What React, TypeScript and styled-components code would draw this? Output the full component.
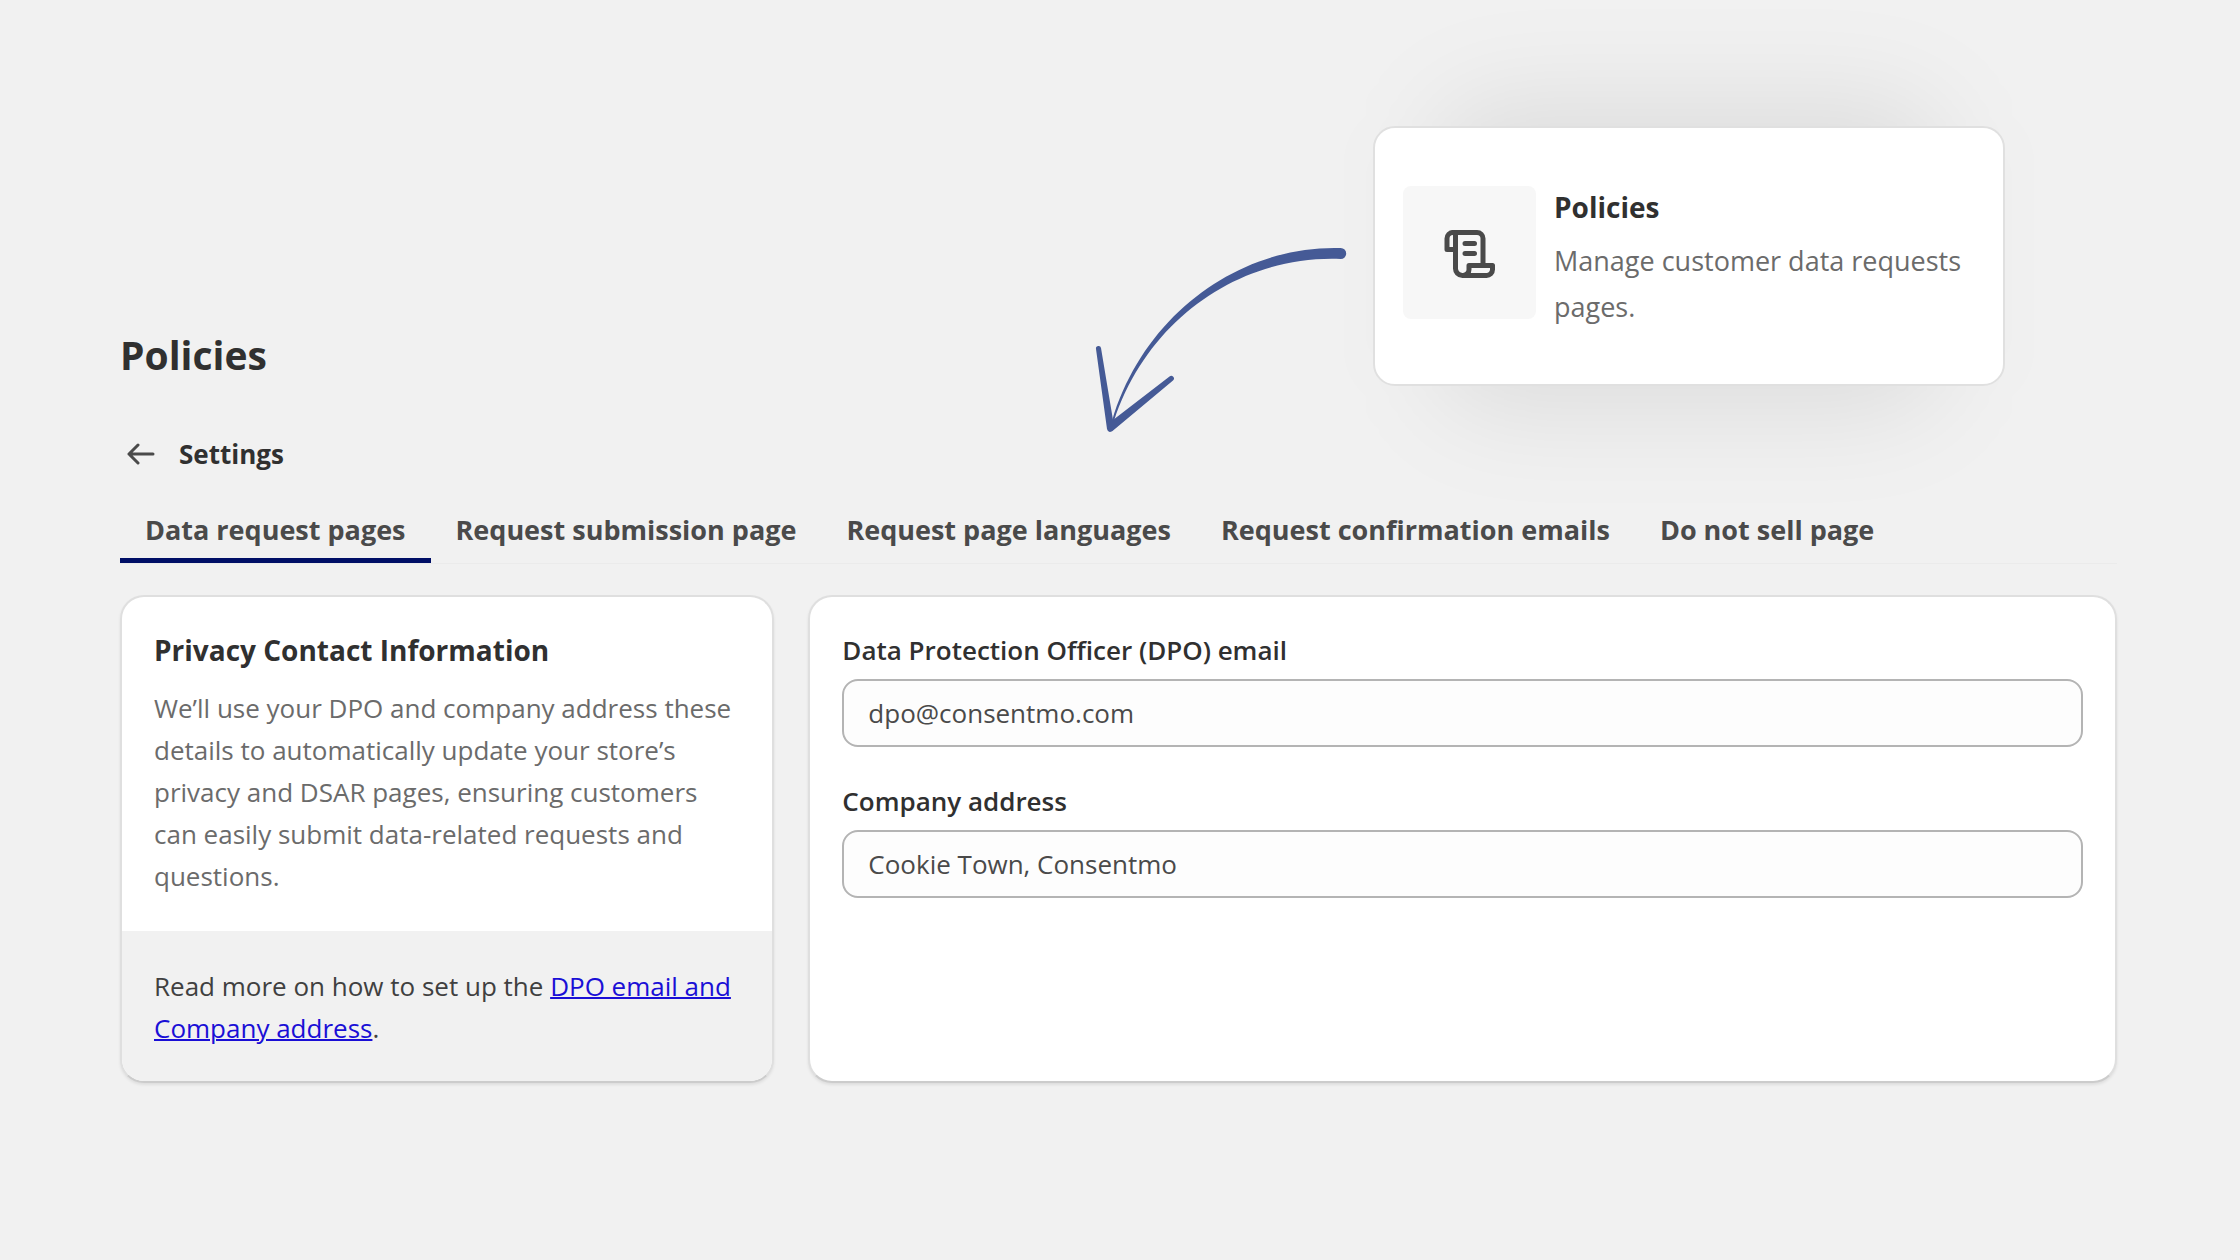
import React, { useState } from "react";
import styled, { createGlobalStyle } from "styled-components";

const GlobalStyle = createGlobalStyle`
  *, *::before, *::after { box-sizing: border-box; }
  body {
    margin: 0;
    background: #f1f1f1;
    color: #303030;
    font-family: "Open Sans", "Noto Sans", sans-serif;
    font-size: 26px;
    line-height: 42px;
  }
  h1, h2, p { margin: 0; }
`;

const Page = styled.main`
  padding: 126px 123px 96px 120px;
`;

const Hero = styled.header`
  display: flex;
  justify-content: space-between;
  align-items: flex-start;
`;

const Intro = styled.div`
  display: flex;
  flex-direction: column;
  align-items: flex-start;
  gap: 46px;
  padding-top: 201px;
`;

const PageTitle = styled.h1`
  font-size: 39px;
  font-weight: 700;
  line-height: 56px;
`;

const BackButton = styled.button`
  display: flex;
  align-items: center;
  gap: 24px;
  padding: 4px 7px;
  border: 0;
  background: none;
  color: #303030;
  font: inherit;
  font-weight: 700;
  cursor: pointer;

  svg { color: #4a4a4a; }
`;

const Showcase = styled.div`
  display: flex;
  align-items: flex-start;
  gap: 27px;
  margin-right: 112px;
  isolation: isolate;
`;

const ArrowArt = styled.svg`
  flex: none;
  margin-top: 117px;
  overflow: visible;
`;

const Callout = styled.section`
  position: relative;
  display: flex;
  align-items: flex-start;
  gap: 18px;
  width: 632px;
  min-height: 260px;
  padding: 58px 28px 54px 28px;
  border: 2px solid #e0e0e0;
  border-radius: 22px;
  background: #fff;

  &::before {
    content: "";
    position: absolute;
    z-index: -1;
    inset: -28px 60px;
    border-radius: 64px;
    background: rgba(0, 0, 0, 0.08);
    filter: blur(50px);
  }
`;

const IconTile = styled.div`
  display: grid;
  place-items: center;
  flex: none;
  width: 133px;
  height: 133px;
  border-radius: 8px;
  background: #f7f7f7;
`;

const CalloutText = styled.p`
  margin-top: 10px;
  color: #6b6b6b;
  font-size: 27px;
  line-height: 46px;
`;

const Heading = styled.h2`
  font-size: 28px;
  font-weight: 700;
  line-height: 42px;
`;

const Tabs = styled.nav`
  display: flex;
  margin-top: 20px;
  border-bottom: 1px solid #ebebeb;
`;

const Tab = styled.button<{ $active: boolean }>`
  padding: 10px 25px 7px;
  border: 0;
  border-bottom: 5px solid ${(p) => (p.$active ? "#000f66" : "transparent")};
  border-radius: 4px 4px 0 0;
  background: none;
  color: #4a4a4a;
  font: inherit;
  font-size: 27px;
  font-weight: 700;
  white-space: nowrap;
  cursor: pointer;
`;

const Columns = styled.div`
  display: grid;
  grid-template-columns: minmax(0, 1fr) minmax(0, 2fr);
  gap: 34px;
  margin-top: 31px;
`;

const Card = styled.section`
  overflow: hidden;
  border: 2px solid #dfdfdf;
  border-bottom-color: #cccccc;
  border-radius: 24px;
  background: #fff;
  box-shadow: 0 2px 3px rgba(0, 0, 0, 0.08);
`;

const CardBody = styled.div`
  padding: 32px 32px 34px;
`;

const Muted = styled.p`
  margin-top: 16px;
  color: #6b6b6b;
`;

const CardFooter = styled.footer`
  padding: 34px 32px 32px;
  background: #f1f1f1;
  color: #404040;

  a { color: #1a0fd6; text-decoration-thickness: 2px; }
`;

const Field = styled.div`
  display: flex;
  flex-direction: column;
  gap: 8px;

  & + & { margin-top: 33px; }
`;

const Label = styled.label`
  font-weight: 600;
`;

const TextInput = styled.input`
  width: 100%;
  height: 68px;
  padding: 0 24px;
  border: 2px solid #b4b4b4;
  border-radius: 16px;
  background: #fdfdfd;
  color: #4a4a4a;
  font: inherit;
`;

const ScrollIcon = () => (
  <svg width="56" height="56" viewBox="1 1 56 56" fill="none" stroke="#4a4a4a" strokeWidth="5" strokeLinecap="round" strokeLinejoin="round" aria-hidden="true">
    <path d="M12 8.500H36a6 6 0 0 1 6 6V41" />
    <path d="M12 8.500a6 6 0 0 0-6 6V25.500H14" />
    <path d="M14.500 10V44a7 7 0 0 0 7 7.500H45.500a6 6 0 0 0 6-6V41.500H28V45a6 6 0 0 1-6 6.500" />
    <path d="M24 19.500H33.500M24 29.500H33.500" />
  </svg>
);

const CurvedArrow = () => (
  <ArrowArt width="250" height="190" viewBox="0 0 250 190" fill="#455a96" aria-hidden="true">
    <path d="M244.700 5C145 2 48 70 16 178L18 178C52 75 145 12 244.700 16A5.500 5.500 0 0 0 244.700 5Z" />
    <path d="M0 106A2.500 2.500 0 0 1 5 105L17 177L73.500 133.500A2.600 2.600 0 0 1 77 137.500L16.500 188Q12 190.500 11 186Z" />
  </ArrowArt>
);

const TABS = [
  "Data request pages",
  "Request submission page",
  "Request page languages",
  "Request confirmation emails",
  "Do not sell page",
];

export default function App() {
  const [active, setActive] = useState(TABS[0]);
  const [email, setEmail] = useState("dpo@consentmo.com");
  const [address, setAddress] = useState("Cookie Town, Consentmo");

  return (
    <>
      <GlobalStyle />
      <Page>
        <Hero>
          <Intro>
            <PageTitle>Policies</PageTitle>
            <BackButton type="button">
              <svg width="28" height="24" viewBox="0 0 28 24" fill="none" stroke="currentColor" strokeWidth="3" strokeLinecap="round" strokeLinejoin="round" aria-hidden="true">
                <path d="M26 12H2M11 3L2 12L11 21" />
              </svg>
              Settings
            </BackButton>
          </Intro>
          <Showcase>
            <CurvedArrow />
            <Callout>
              <IconTile>
                <ScrollIcon />
              </IconTile>
              <div>
                <Heading>Policies</Heading>
                <CalloutText>Manage customer data requests pages.</CalloutText>
              </div>
            </Callout>
          </Showcase>
        </Hero>

        <Tabs aria-label="Policy settings">
          {TABS.map((name) => (
            <Tab key={name} type="button" $active={name === active} onClick={() => setActive(name)}>
              {name}
            </Tab>
          ))}
        </Tabs>

        <Columns>
          <Card>
            <CardBody>
              <Heading>Privacy Contact Information</Heading>
              <Muted>
                We’ll use your DPO and company address these details to automatically update your
                store’s privacy and DSAR pages, ensuring customers can easily submit data-related
                requests and questions.
              </Muted>
            </CardBody>
            <CardFooter>
              Read more on how to set up the <a href="#dpo">DPO email and Company address</a>.
            </CardFooter>
          </Card>
          <Card>
            <CardBody>
              <Field>
                <Label htmlFor="dpo-email">Data Protection Officer (DPO) email</Label>
                <TextInput id="dpo-email" type="email" value={email} onChange={(e) => setEmail(e.target.value)} />
              </Field>
              <Field>
                <Label htmlFor="company-address">Company address</Label>
                <TextInput id="company-address" type="text" value={address} onChange={(e) => setAddress(e.target.value)} />
              </Field>
            </CardBody>
          </Card>
        </Columns>
      </Page>
    </>
  );
}
